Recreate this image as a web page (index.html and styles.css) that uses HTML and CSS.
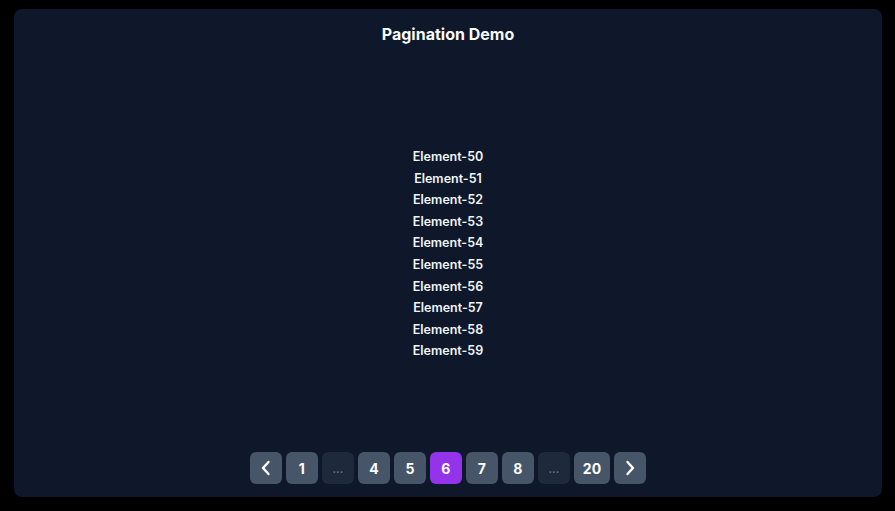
FILE: index.html
```html
<!DOCTYPE html>
<html lang="en">
<head>
  <meta charset="UTF-8">
  <title>Pagination Demo</title>
  <link rel="stylesheet" href="styles.css">
</head>
<body>

<div class="card">
  <h2 class="title">Pagination Demo</h2>

  <!-- current page items -->
  <div class="items">
    <ul class="item-list">
      <li>Element-50</li>
      <li>Element-51</li>
      <li>Element-52</li>
      <li>Element-53</li>
      <li>Element-54</li>
      <li>Element-55</li>
      <li>Element-56</li>
      <li>Element-57</li>
      <li>Element-58</li>
      <li>Element-59</li>
    </ul>
  </div>

  <!-- page buttons -->
  <nav class="pager">
    <button class="page-btn icon" aria-label="Previous">
      <svg width="12" height="16" viewBox="0 0 12 16" fill="none" stroke="currentColor" stroke-width="2.4" stroke-linecap="round" stroke-linejoin="round"><path d="M8.5 2 3 8l5.5 6"/></svg>
    </button>
    <button class="page-btn">1</button>
    <span class="page-btn gap">...</span>
    <button class="page-btn">4</button>
    <button class="page-btn">5</button>
    <button class="page-btn active">6</button>
    <button class="page-btn">7</button>
    <button class="page-btn">8</button>
    <span class="page-btn gap">...</span>
    <button class="page-btn">20</button>
    <button class="page-btn icon" aria-label="Next">
      <svg width="12" height="16" viewBox="0 0 12 16" fill="none" stroke="currentColor" stroke-width="2.4" stroke-linecap="round" stroke-linejoin="round"><path d="M3.5 2 9 8l-5.5 6"/></svg>
    </button>
  </nav>
</div>

</body>
</html>
```

FILE: styles.css
```css
html, body {
  height: 100%;
}

body {
  margin: 0;
  padding: 9px 13px 14px 14px;
  box-sizing: border-box;
  background: #000;
  font-family: Inter, "Open Sans", sans-serif;
  color: #f1f5f9;
}

.card {
  height: 100%;
  display: flex;
  flex-direction: column;
  background: #0f172a;
  border-radius: 8px;
  padding: 13px 0 13px;
  box-sizing: border-box;
}

.title {
  margin: 0;
  font-size: 16px;
  line-height: 24px;
  font-weight: 700;
  text-align: center;
  color: #f8fafc;
}

.items {
  flex: 1;
  display: flex;
  align-items: center;
  justify-content: center;
  padding-top: 10px;
}

.item-list {
  list-style: none;
  margin: 0;
  padding: 0;
  text-align: center;
  font-size: 12.5px;
  font-weight: 600;
  line-height: 21.6px;
  color: #f1f5f9;
}

.pager {
  display: flex;
  justify-content: center;
  gap: 4px;
}

.page-btn {
  min-width: 32px;
  height: 32px;
  padding: 0 9px;
  box-sizing: border-box;
  display: flex;
  align-items: center;
  justify-content: center;
  border: none;
  border-radius: 6px;
  background: #475569;
  color: #fff;
  font-family: inherit;
  font-size: 14px;
  font-weight: 700;
  cursor: pointer;
}

.page-btn.icon {
  padding: 0;
}

.page-btn svg {
  flex: none;
}

.page-btn.gap {
  background: #1e293b;
  color: #64748b;
  font-weight: 500;
  font-size: 12px;
  cursor: default;
}

.page-btn.active {
  background: #9333ea;
}
```
